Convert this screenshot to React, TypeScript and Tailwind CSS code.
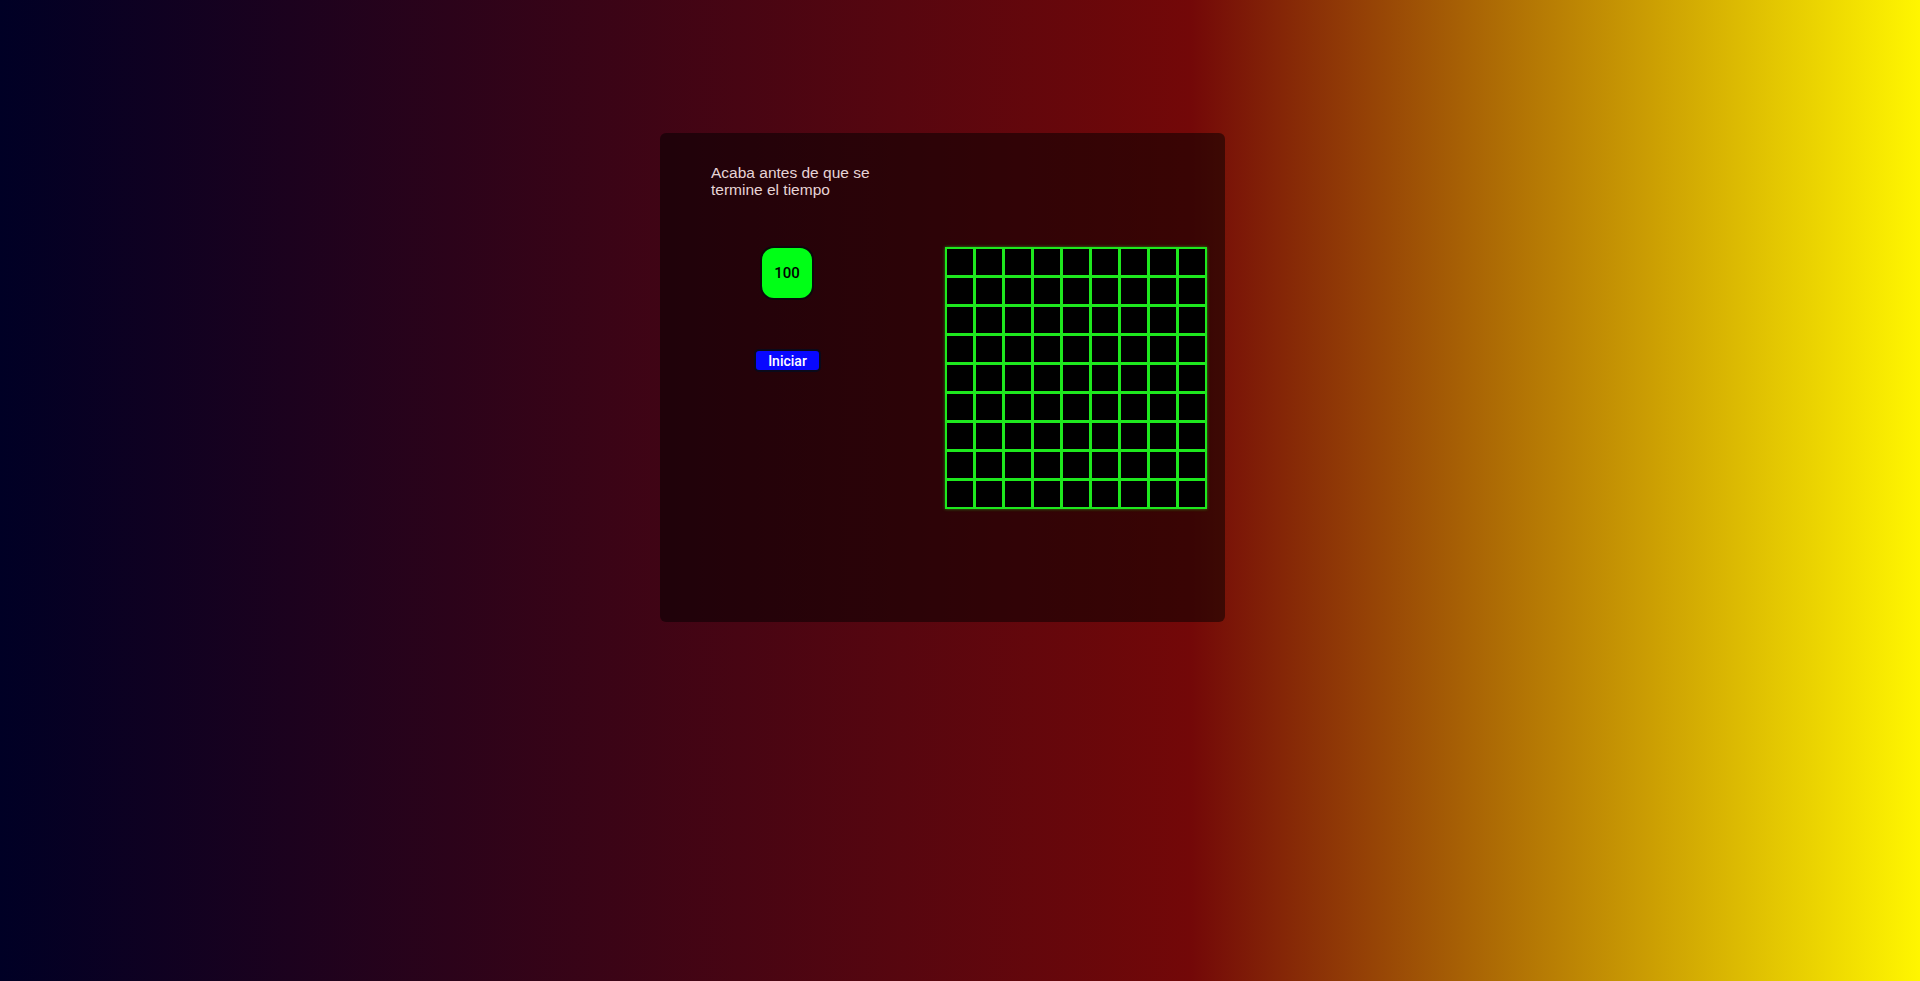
import React from "react"

const cells = Array.from({ length: 81 }, (_, i) => i)

export default function App() {
  return (
    <div className="min-h-screen w-full bg-[linear-gradient(to_right,#000025_0%,#730808_62%,#fff600_100%)] pl-[660px] pt-[133px]">
      <div className="flex h-[489px] w-[565px] rounded-md bg-black/50 pl-[51px] pt-[31px]">
        {/* left column */}
        <div className="flex w-[234px] flex-col">
          <p className="w-[180px] font-['Century_Gothic','URW_Gothic','Liberation_Sans',sans-serif] text-[15.5px] leading-[17px] text-[#e6d4d6]">
            Acaba antes de que se termine el tiempo
          </p>
          <div className="ml-[49px] mt-[48px] flex h-[54px] w-[54px] items-center justify-center rounded-[14px] border-2 border-[#0a0a0a] bg-[#00ff16] font-['Roboto',sans-serif] text-[15px] font-medium text-black">
            100
          </div>
          <button className="ml-[43px] mt-[49px] flex h-[23px] w-[67px] items-center justify-center rounded-[5px] border-2 border-[#0a0a1a] bg-[#0808ff] font-['Roboto',sans-serif] text-[14px] font-medium leading-none text-white">
            Iniciar
          </button>
        </div>

        {/* board */}
        <div className="mt-[83px] self-start">
          <div className="grid grid-cols-[repeat(9,26px)] gap-[3px] border-2 border-[#1ee81e] bg-[#1ee81e] shadow-[0_0_3px_rgba(30,232,30,0.6)]">
            {cells.map((c) => (
              <div key={c} className="h-[26px] w-[26px] bg-black" />
            ))}
          </div>
        </div>
      </div>
    </div>
  )
}
